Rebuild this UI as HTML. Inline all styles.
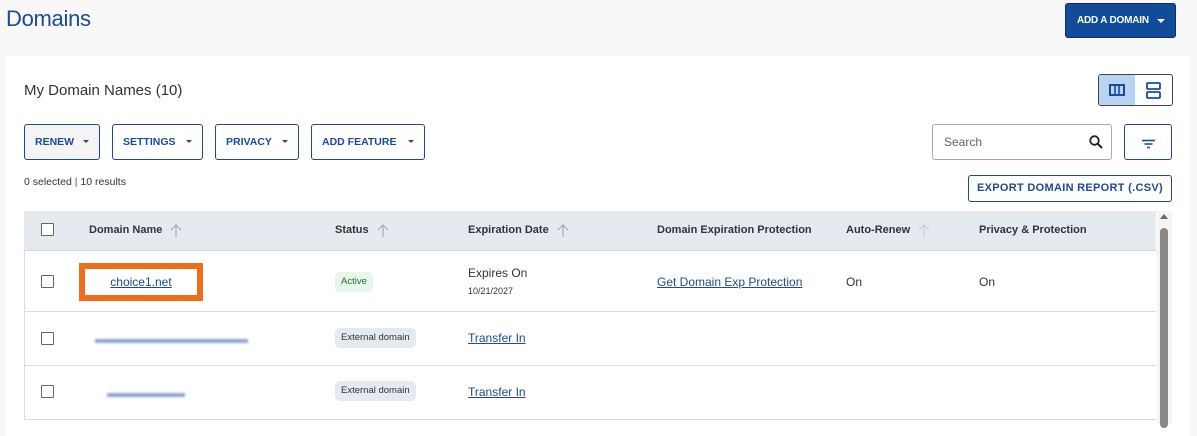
<!DOCTYPE html>
<html><head><style>
*{box-sizing:border-box;margin:0;padding:0}
body{width:1197px;height:424px;background:#f8f8f8;font-family:"Liberation Sans",sans-serif;position:relative;overflow:hidden;color:#333}
.a{position:absolute}
.card{left:6px;top:56px;width:1184px;height:380px;background:#fff}
h1{position:absolute;left:6px;top:6px;font-size:22px;font-weight:normal;color:#1c4a99;letter-spacing:-0.3px}
.add{left:1065px;top:3px;width:111px;height:35px;background:#114b9a;border:1px solid #0b2f66;border-radius:3px;color:#fff;font-size:10px;font-weight:bold;line-height:33px;padding-left:11px;white-space:nowrap;letter-spacing:-0.2px}
.add i{position:absolute;right:10px;top:15px;border-left:4px solid transparent;border-right:4px solid transparent;border-top:4px solid #fff}
.btn{top:124px;height:36px;border:1px solid #1c4a99;border-radius:3px;color:#1c4a99;font-size:10.5px;font-weight:bold;line-height:34px;padding-left:10px;white-space:nowrap}
.btn i{position:absolute;right:10px;top:15px;border-left:3px solid transparent;border-right:3px solid transparent;border-top:3px solid #1c4a99}
.th{top:211px;left:24px;width:1132px;height:40px;background:#e4eaef;border-bottom:1px solid #cfd6dc}
.hd{top:224px;font-size:11px;font-weight:bold;color:#333;line-height:13px;white-space:nowrap}
.hd svg{vertical-align:top;margin-left:8px}
.row{left:24px;width:1132px;border-bottom:1px solid #ddd;border-left:1px solid #ddd}
.cb{left:41px;width:13px;height:13px;border:1px solid #666;border-radius:1px;background:#fff}
.lk{color:#1c4a99;text-decoration:underline;font-size:12px}
.pill{height:20px;border-radius:5px;font-size:9.5px;line-height:20px;padding:0 6px}
.t{font-size:12px}
</style></head><body>
<h1>Domains</h1>
<div class="a add">ADD A DOMAIN<i></i></div>
<div class="a card"></div>
<div class="a" style="left:24px;top:82px;font-size:15px;color:#333">My Domain Names (10)</div>
<div class="a" style="left:1098px;top:74px;width:75px;height:32px;border:1px solid #444;border-radius:3px;overflow:hidden">
<div class="a" style="left:0;top:0;width:36px;height:30px;background:#b9d3f2"></div>
<svg class="a" style="left:10px;top:9px" width="16" height="12"><rect x="1" y="1" width="14" height="10" fill="none" stroke="#1c4a99" stroke-width="2"/><line x1="6" y1="1" x2="6" y2="11" stroke="#1c4a99" stroke-width="1.6"/><line x1="10" y1="1" x2="10" y2="11" stroke="#1c4a99" stroke-width="1.6"/></svg>
<svg class="a" style="left:47px;top:7px" width="16" height="17"><rect x="1" y="1" width="13" height="6" rx="1" fill="none" stroke="#1c4a99" stroke-width="1.8"/><rect x="1" y="10" width="13" height="6" rx="1" fill="none" stroke="#1c4a99" stroke-width="1.8"/></svg>
</div>
<div class="a btn" style="left:24px;width:76px;background:#f4f4f4">RENEW<i></i></div>
<div class="a btn" style="left:112px;width:91px">SETTINGS<i></i></div>
<div class="a btn" style="left:215px;width:84px">PRIVACY<i></i></div>
<div class="a btn" style="left:311px;width:114px">ADD FEATURE<i></i></div>
<div class="a" style="left:932px;top:124px;width:180px;height:36px;border:1px solid #aaa;border-radius:3px;font-size:12px;color:#666;line-height:34px;padding-left:11px">Search
<svg class="a" style="right:8px;top:10px" width="14" height="14"><circle cx="5.5" cy="5.5" r="4.3" fill="none" stroke="#222" stroke-width="1.8"/><line x1="8.6" y1="8.6" x2="13" y2="13" stroke="#222" stroke-width="2"/></svg></div>
<div class="a" style="left:1124px;top:124px;width:48px;height:36px;border:1px solid #1c4a99;border-radius:3px">
<svg class="a" style="left:16px;top:14px" width="15" height="10"><line x1="1" y1="1.5" x2="14" y2="1.5" stroke="#1c4a99" stroke-width="1.6"/><line x1="3.5" y1="5" x2="11.5" y2="5" stroke="#1c4a99" stroke-width="1.6"/><line x1="6" y1="8.5" x2="9" y2="8.5" stroke="#1c4a99" stroke-width="1.6"/></svg></div>
<div class="a" style="left:24px;top:176px;font-size:10.5px;color:#333">0 selected <span style="color:#a33">|</span> 10 results</div>
<div class="a" style="left:968px;top:175px;width:204px;height:27px;border:1px solid #1c4a99;border-radius:3px;color:#1c4a99;font-size:11px;font-weight:bold;line-height:25px;text-align:center;letter-spacing:0.3px">EXPORT DOMAIN REPORT (.CSV)</div>
<div class="a th"></div>
<div class="a cb" style="top:223px"></div>
<div class="a hd" style="left:89px">Domain Name<svg width="12" height="13"><path d="M6 13V1M1 6l5-5 5 5" fill="none" stroke="#aaa" stroke-width="1.2"/></svg></div>
<div class="a hd" style="left:335px">Status<svg width="12" height="13"><path d="M6 13V1M1 6l5-5 5 5" fill="none" stroke="#aaa" stroke-width="1.2"/></svg></div>
<div class="a hd" style="left:468px">Expiration Date<svg width="12" height="13"><path d="M6 13V1M1 6l5-5 5 5" fill="none" stroke="#aaa" stroke-width="1.2"/></svg></div>
<div class="a hd" style="left:657px">Domain Expiration Protection</div>
<div class="a hd" style="left:846px">Auto-Renew<svg width="12" height="13"><path d="M6 13V1M1 6l5-5 5 5" fill="none" stroke="#ccc" stroke-width="1.2"/></svg></div>
<div class="a hd" style="left:979px">Privacy &amp; Protection</div>
<div class="a row" style="top:251px;height:61px"></div>
<div class="a row" style="top:312px;height:54px"></div>
<div class="a row" style="top:366px;height:54px"></div>
<div class="a cb" style="top:275px"></div>
<div class="a cb" style="top:332px"></div>
<div class="a cb" style="top:385px"></div>
<div class="a" style="left:79px;top:263px;width:124px;height:38px;border:6px solid #f26d1b;background:#fff;text-align:center;line-height:25px"><span class="lk">choice1.net</span></div>
<div class="a pill" style="left:335px;top:272px;background:#e6f6e8;color:#2a6a35">Active</div>
<div class="a t" style="left:468px;top:266px">Expires On</div>
<div class="a" style="left:468px;top:286px;font-size:9px">10/21/2027</div>
<div class="a lk" style="left:657px;top:275px">Get Domain Exp Protection</div>
<div class="a t" style="left:846px;top:275px">On</div>
<div class="a t" style="left:979px;top:275px">On</div>
<div class="a" style="left:95px;top:339px;width:153px;height:4px;background:#8fa3cc;filter:blur(1px)"></div>
<div class="a" style="left:107px;top:393px;width:78px;height:4px;background:#8fa3cc;filter:blur(1px)"></div>
<div class="a pill" style="left:335px;top:328px;background:#e4eaef;color:#333">External domain</div>
<div class="a pill" style="left:335px;top:381px;background:#e4eaef;color:#333">External domain</div>
<div class="a lk" style="left:468px;top:331px">Transfer In</div>
<div class="a lk" style="left:468px;top:385px">Transfer In</div>
<div class="a" style="left:1157px;top:211px;width:15px;height:213px;background:#f4f4f4"></div>
<div class="a" style="left:1160px;top:214px;border-left:4px solid transparent;border-right:4px solid transparent;border-bottom:5px solid #666"></div>
<div class="a" style="left:1160px;top:228px;width:8px;height:200px;background:#888;border-radius:4px"></div>
</body></html>
